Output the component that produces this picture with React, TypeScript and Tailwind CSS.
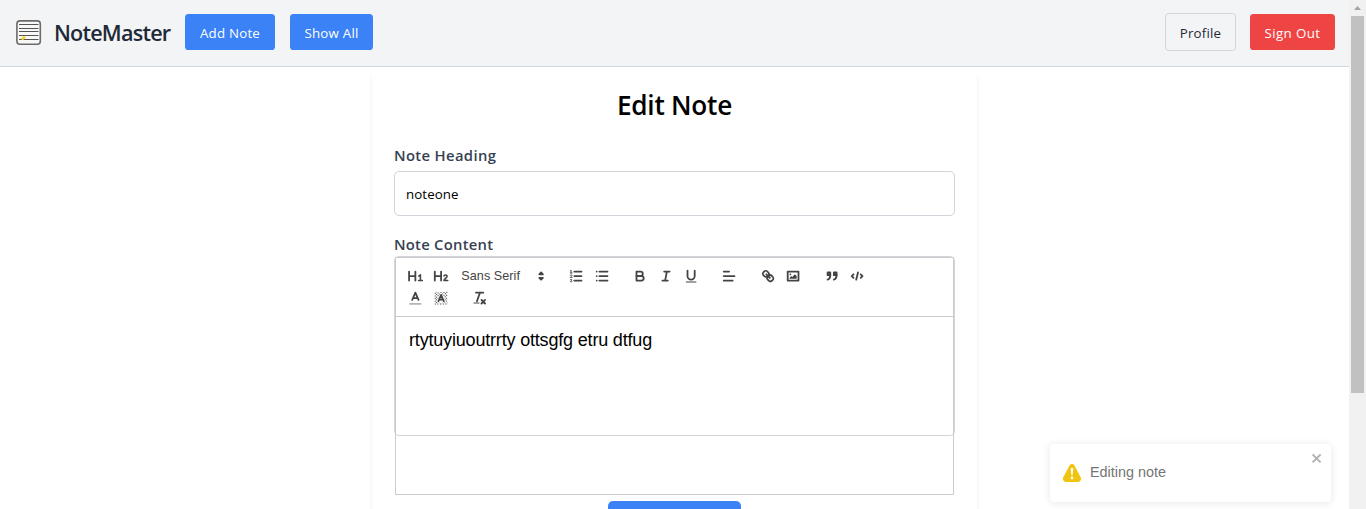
import React from "react";

const ui = "font-['Open_Sans','Noto_Sans',sans-serif]";

function Icon({ children }: { children: React.ReactNode }) {
  return (
    <button className="flex h-[21.6px] w-[25.2px] shrink-0 items-center px-[4.5px]">
      <svg
        viewBox="0 0 18 18"
        className="h-[16.2px] w-[16.2px] shrink-0 fill-none stroke-[#444] stroke-2"
        strokeLinecap="round"
        strokeLinejoin="round"
      >
        {children}
      </svg>
    </button>
  );
}

const solid = "fill-[#444] stroke-none";

function Group({ children }: { children: React.ReactNode }) {
  return <div className="mr-[13.5px] flex">{children}</div>;
}

function Toolbar() {
  return (
    <div className="flex h-[60px] flex-wrap content-start border border-[#ccc] pt-[7.2px] pl-[7.2px]">
      <Group>
        <Icon>
          <path d="M1.2 4V14M8.2 4V14M1.2 9H8.2" />
          <path d="M12 9L13.8 7.6V13.8M11.8 13.9H16" strokeWidth="1.7" />
        </Icon>
        <Icon>
          <path d="M2 4V14M9 4V14M2 9H9" />
          <path d="M12.2 9C12.4 7.2 15.8 7.2 15.7 9.2C15.6 10.8 12.6 12.2 12.2 13.9H16.4" strokeWidth="1.7" />
        </Icon>
        <div className="flex h-[21.6px] w-[96.8px] items-center pl-[7.8px] font-['Liberation_Sans',sans-serif] text-[12.6px] font-medium text-[#444]">
          <span className="w-[71.2px] pt-[0.6px] tracking-[0.05px]">Sans Serif</span>
          <svg
            viewBox="0 0 18 18"
            className="h-[16.2px] w-[16.2px] fill-[#444] stroke-[#444] stroke-2"
            strokeLinejoin="round"
          >
            <polygon points="7 11 9 13 11 11" />
            <polygon points="7 7 9 5 11 7" />
          </svg>
        </div>
      </Group>
      <Group>
        <Icon>
          <path d="M7 4H15M7 9H15M7 14H15" />
          <path d="M2.5 5.5H4.5M2.7 3L3.5 2.5V5.5" strokeWidth="1" />
          <path d="M4.5 10.5h-2c0-.234 1.85-1.076 1.85-2.234A.959.959 0 0 0 2.5 8.156" strokeWidth="1" />
          <path
            d="M2.5 14.846a.959.959 0 0 0 1.85-.109A.7.7 0 0 0 3.75 14a.688.688 0 0 0 .6-.736.959.959 0 0 0-1.85-.109"
            strokeWidth="1"
          />
        </Icon>
        <Icon>
          <path d="M6 4H15M6 9H15M6 14H15M3 4H3M3 9H3M3 14H3" />
        </Icon>
      </Group>
      <Group>
        <Icon>
          <path d="M5 4H9.5A2.5 2.5 0 0 1 9.5 9H5Z" />
          <path d="M5 9H10.5A2.5 2.5 0 0 1 10.5 14H5Z" />
        </Icon>
        <Icon>
          <path d="M8 4H14M6 14H12M9 14L11 4" />
        </Icon>
        <Icon>
          <path d="M5 3V9a4 4 0 0 0 8 0V3" />
          <rect className={solid} x="3" y="15" width="12" height="1" rx="0.5" />
        </Icon>
      </Group>
      <Group>
        <Icon>
          <path d="M3 4H9M3 9H15M3 14H13" />
        </Icon>
      </Group>
      <Group>
        <Icon>
          <path d="M7 7L11 11" />
          <path d="M8.9 4.577a3.476 3.476 0 0 1 .36 4.679A3.476 3.476 0 0 1 4.577 8.9C3.185 7.5 2.035 6.4 4.217 4.217S7.5 3.185 8.9 4.577Z" />
          <path d="M13.423 9.1a3.476 3.476 0 0 0-4.679-.36 3.476 3.476 0 0 0 .36 4.679c1.392 1.392 2.5 2.542 4.679.36S14.815 10.5 13.423 9.1Z" />
        </Icon>
        <Icon>
          <rect x="3" y="4" width="12" height="10" />
          <circle className={solid} cx="6" cy="7" r="1" />
          <polygon className={solid} points="5 12 5 11 7 9 8 10 11 7 13 9 13 12" />
        </Icon>
      </Group>
      <Group>
        <Icon>
          <rect className="fill-[#444]" x="4" y="5" width="3" height="3" />
          <rect className="fill-[#444]" x="11" y="5" width="3" height="3" />
          <path className="fill-[#444]" d="M7 8c0 4.031-3 5-3 5" />
          <path className="fill-[#444]" d="M14 8c0 4.031-3 5-3 5" />
        </Icon>
        <Icon>
          <path d="M5 7L3 9L5 11M13 7L15 9L13 11M10 5L8 13" />
        </Icon>
      </Group>
      <div className="w-full pt-[0.6px]" />
      <Group>
        <Icon>
          <path d="M2.2 15.4H14.2" opacity="0.4" />
          <path d="M4.7 11L8.2 3L11.7 11M5.6 9H10.8" />
        </Icon>
        <Icon>
          <path
            d="M2 4L4 2M2 7L7 2M2 10L10 2M2 13L13 2M2 16L16 2M5 16L16 5M8 16L16 8M11 16L16 11M14 16L16 14"
            strokeWidth="1.15"
            strokeDasharray="1.2 1.1"
            strokeLinecap="butt"
          />
          <path d="M6 12.5L9 5.5L12 12.5Z" fill="white" stroke="white" strokeWidth="3.4" />
          <path d="M6 12.5L9 5.5L12 12.5M6.9 10.6H11.1" />
        </Icon>
      </Group>
      <Group>
        <Icon>
          <path d="M4.5 3H12.5M5.5 12.5L8.85 3M10.5 11L14.5 15M14.5 11L10.5 15" />
          <rect className={solid} x="1.5" y="14" width="7" height="1" rx="0.5" />
        </Icon>
      </Group>
    </div>
  );
}

function Logo() {
  return (
    <svg viewBox="0 0 26 26" className="h-[26px] w-[26px] fill-none">
      <rect x="0.9" y="0.9" width="23.4" height="23.4" rx="3" fill="#f8f8f8" stroke="#6b6b6b" strokeWidth="1.6" />
      <path d="M3 4.5H22.5M3 8.5H22.5M3 11.5H22.5M3 15.5H22.5M3 19.5H22.5" stroke="#555" strokeWidth="1" />
      <path d="M5.6 19.6L9 16.8" stroke="#fbd32c" strokeWidth="2.6" />
    </svg>
  );
}

function Header() {
  return (
    <header className="flex h-[67px] shrink-0 items-start justify-between border-b border-gray-300 bg-[#f3f4f6] pr-[14px] pl-4 text-[13.3px] leading-5 tracking-[0.22px]">
      <div className="flex pt-[14px]">
        <div className="mt-[6px] mr-3">
          <Logo />
        </div>
        <h1 className="w-[131px] pt-[3px] text-[21.6px] leading-8 font-semibold tracking-[-0.8px] whitespace-nowrap text-[#1f2937]">
          NoteMaster
        </h1>
        <button className="mr-[15px] h-9 w-[90px] rounded-[3.6px] bg-[#3b82f6] pt-0.5 text-white">Add Note</button>
        <button className="h-9 w-[83px] rounded-[3.6px] bg-[#3b82f6] pt-0.5 text-white">Show All</button>
      </div>
      <div className="flex items-center pt-[13px]">
        <button className="mr-[14px] h-[38px] w-[71px] rounded-[3.6px] border border-gray-300 pt-0.5 text-[#1f2937]">
          Profile
        </button>
        <button className="h-9 w-[85px] rounded-[3.6px] bg-[#ef4444] pt-0.5 tracking-[0.4px] text-white">
          Sign Out
        </button>
      </div>
    </header>
  );
}

function Toast() {
  return (
    <div className="absolute top-[444px] left-[1050px] flex h-[58px] w-[281px] items-center rounded-[4px] bg-white pl-[13px] font-['Liberation_Sans',sans-serif] text-[14.4px] text-[#757575] shadow-[0_1px_9px_rgba(0,0,0,0.1)]">
      <svg viewBox="0 0 24 24" className="mr-[9px] h-[18px] w-[18px] fill-[#f1c40f]">
        <path d="M23.32 17.191L15.438 2.184C14.728.833 13.416 0 11.996 0c-1.42 0-2.733.833-3.443 2.184L.533 17.448a4.744 4.744 0 000 4.368C1.243 23.167 2.555 24 3.975 24h16.05C22.22 24 24 22.044 24 19.632c0-.904-.251-1.746-.68-2.44zm-9.622 1.46c0 1.033-.724 1.823-1.698 1.823s-1.698-.79-1.698-1.822v-.043c0-1.028.724-1.822 1.698-1.822s1.698.79 1.698 1.822v.043zm.039-12.285l-.84 8.06c-.057.581-.408.943-.897.943-.49 0-.84-.367-.896-.942l-.84-8.065c-.057-.624.25-1.095.779-1.095h1.91c.528.005.84.476.784 1.1z" />
      </svg>
      <span>Editing note</span>
      <button className="absolute top-[7px] right-[7px]">
        <svg viewBox="0 0 14 16" className="h-[14.4px] w-[12.6px] fill-[#b2b2b2]">
          <path
            fillRule="evenodd"
            d="M7.71 8.23l3.75 3.75-1.48 1.48-3.75-3.75-3.75 3.75L1 11.98l3.75-3.75L1 4.48 2.48 3l3.75 3.75L9.98 3l1.48 1.48-3.75 3.75z"
          />
        </svg>
      </button>
    </div>
  );
}

export default function App() {
  return (
    <div className={`relative flex h-[509px] w-[1366px] overflow-hidden bg-white text-black ${ui}`}>
      <div className="flex w-[1349px] flex-col">
        <Header />
        <div className="min-h-0 flex-1 overflow-hidden">
          <main className="mx-auto mt-[5px] h-[600px] w-[605px] px-[22px] pt-[15px] shadow-[0_4px_5px_-1px_rgba(0,0,0,0.1)]">
            <h2 className="text-center text-[26.2px] leading-9 font-semibold tracking-[-0.25px]">Edit Note</h2>
            <label className="mt-[21px] block text-[14.8px] leading-[22px] font-semibold tracking-[0.35px] text-[#374151]">
              Note Heading
            </label>
            <input
              className="mt-[5px] block h-[45px] w-full rounded-[5px] border border-gray-300 px-[11px] text-[13.3px] tracking-[0.1px] outline-none"
              defaultValue="noteone"
            />
            <label className="mt-[17px] mb-px block text-[14.8px] leading-[22px] font-semibold tracking-[0.25px] text-[#374151]">
              Note Content
            </label>
            <div className="h-[180px] rounded-[5px] border border-gray-300">
              <Toolbar />
              <div className="h-[178px] border border-t-0 border-[#ccc] px-[13px] pt-[11px] font-['Liberation_Sans',sans-serif] text-[18px] leading-[25px] tracking-[-0.18px]">
                rtytuyiuoutrrty ottsgfg etru dtfug
              </div>
            </div>
            <button
              aria-label="Save"
              className="mx-auto mt-[65px] block h-[40px] w-[133px] rounded-[5px] bg-[#3b82f6]"
            />
          </main>
        </div>
      </div>
      <div className="flex w-[17px] flex-col items-center bg-[#f1f1f1]">
        <svg viewBox="0 0 17 16" className="h-4 w-[17px] shrink-0 fill-[#a3a3a3]">
          <path d="M5 10L8.5 6L12 10Z" />
        </svg>
        <div className="h-[377px] w-[13px] bg-[#c1c1c1]" />
      </div>
      <Toast />
    </div>
  );
}
